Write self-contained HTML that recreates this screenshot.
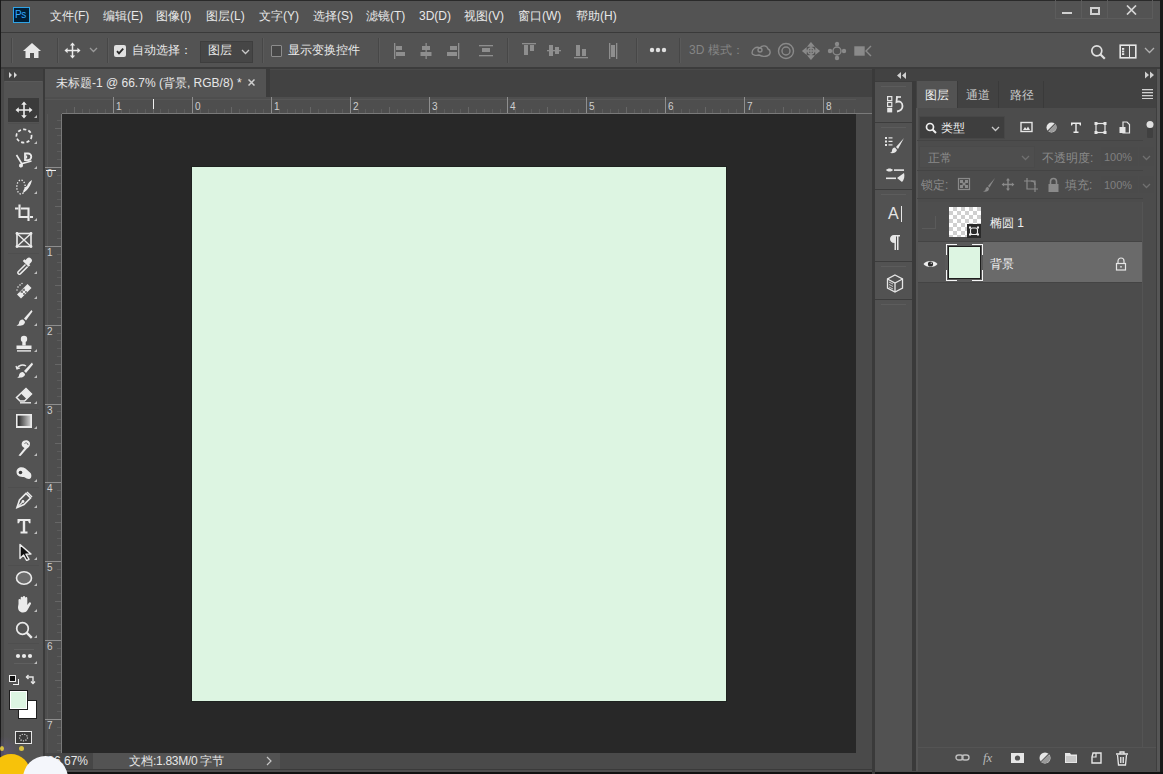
<!DOCTYPE html>
<html><head><meta charset="utf-8">
<style>
*{margin:0;padding:0;box-sizing:border-box}
html,body{width:1163px;height:774px;overflow:hidden;background:#535353;font-family:"Liberation Sans",sans-serif;color:#e6e6e6}
.a{position:absolute}
.c{display:inline-block;width:12px;font-style:normal;text-align:center;letter-spacing:0}
.sep{position:absolute;top:38px;width:1px;height:25px;background:#474747;box-shadow:1px 0 0 #5a5a5a}
.ot{position:absolute;top:42px;font-size:12px;line-height:16px;color:#e8e8e8;white-space:nowrap}
.grp{position:absolute;left:875px;width:37px;background:#525252;border-top:1px solid #3c3c3c}
.grp:before{content:"";position:absolute;left:6px;top:4px;width:25px;height:1px;background:#5c5c5c}
.mn{position:absolute;top:8px;font-size:12px;line-height:16px;color:#e8e8e8;white-space:nowrap}
#win{position:absolute;left:0;top:0;width:1163px;height:774px;background:#535353;overflow:hidden}
</style></head><body>
<div id="win">
  <!-- borders -->
  <div class="a" style="left:0;top:0;width:1163px;height:1px;background:#2a2a2a"></div>
  <div class="a" style="left:0;top:0;width:1px;height:774px;background:#1a1a1a"></div>
  <div class="a" style="left:1160px;top:0;width:3px;height:774px;background:#1a1a1a"></div>
  <!-- menu bar -->
  <div class="a" style="left:1px;top:1px;width:1159px;height:31px;background:#535353"></div>
  <div class="a" style="left:1px;top:32px;width:1159px;height:1px;background:#3a3a3a"></div>

  <!-- menu content -->
  <div class="a" style="left:13px;top:7px;width:17px;height:16px;background:#001e36;border:1px solid #2fa3e6"></div>
  <div class="a" style="left:15px;top:8px;font-size:10px;line-height:13px;color:#31a8ff;letter-spacing:-0.3px">Ps</div>
  <div class="mn" style="left:50px"><i class="c">文</i><i class="c">件</i>(F)</div>
  <div class="mn" style="left:103px"><i class="c">编</i><i class="c">辑</i>(E)</div>
  <div class="mn" style="left:156px"><i class="c">图</i><i class="c">像</i>(I)</div>
  <div class="mn" style="left:206px"><i class="c">图</i><i class="c">层</i>(L)</div>
  <div class="mn" style="left:259px"><i class="c">文</i><i class="c">字</i>(Y)</div>
  <div class="mn" style="left:313px"><i class="c">选</i><i class="c">择</i>(S)</div>
  <div class="mn" style="left:366px"><i class="c">滤</i><i class="c">镜</i>(T)</div>
  <div class="mn" style="left:419px">3D(D)</div>
  <div class="mn" style="left:464px"><i class="c">视</i><i class="c">图</i>(V)</div>
  <div class="mn" style="left:518px"><i class="c">窗</i><i class="c">口</i>(W)</div>
  <div class="mn" style="left:576px"><i class="c">帮</i><i class="c">助</i>(H)</div>
  <!-- window controls -->
  <div class="a" style="left:1055px;top:0;width:98px;height:19px;border:1px solid #5c5c5c;border-top:none"></div>
  <div class="a" style="left:1081px;top:0;width:1px;height:19px;background:#5c5c5c"></div>
  <div class="a" style="left:1107px;top:0;width:1px;height:19px;background:#5c5c5c"></div>
  <div class="a" style="left:1062px;top:12px;width:10px;height:2px;background:#d0d0d0"></div>
  <div class="a" style="left:1090px;top:7px;width:10px;height:8px;border:2px solid #d0d0d0;border-top-width:2px"></div>
  <svg class="a" style="left:1126px;top:5px" width="11" height="10" viewBox="0 0 11 10"><path d="M1 0.5L10 9.5M10 0.5L1 9.5" stroke="#d6d6d6" stroke-width="1.7"/></svg>
  <!-- options bar -->
  <div class="a" style="left:1px;top:33px;width:1159px;height:34px;background:#535353"></div>
  <div class="a" style="left:1px;top:67px;width:1159px;height:2px;background:#3c3c3c"></div>

  <!-- options content -->
  <div class="a" style="left:11px;top:38px;width:1px;height:25px;background:#474747"></div>
  <div class="a" style="left:12px;top:38px;width:1px;height:25px;background:#5c5c5c"></div>
  <svg class="a" style="left:23px;top:43px" width="18" height="15" viewBox="0 0 18 15"><path d="M9 0L0 8h2.5v7h4.5v-5h4v5h4.5V8H18z" fill="#e8e8e8"/></svg>
  <div class="sep" style="left:57px"></div>
  <svg class="a" style="left:64px;top:42px" width="17" height="17" viewBox="0 0 18 18"><path d="M9 0.5L6.2 3.8h2v4.4H3.8v-2L0.5 9l3.3 2.8v-2h4.4v4.4h-2L9 17.5l2.8-3.3h-2V9.8h4.4v2L17.5 9l-3.3-2.8v2H9.8V3.8h2z" fill="#ebebeb"/></svg>
  <svg class="a" style="left:89px;top:47px" width="9" height="6" viewBox="0 0 9 6"><path d="M1 1l3.5 3.5L8 1" stroke="#9a9a9a" stroke-width="1.3" fill="none"/></svg>
  <div class="sep" style="left:107px"></div>
  <div class="a" style="left:114px;top:45px;width:12px;height:12px;background:#e0e0e0;border-radius:2px"></div>
  <svg class="a" style="left:115px;top:46px" width="10" height="10" viewBox="0 0 10 10"><path d="M2 5.2l2 2.2L8.2 2.6" stroke="#2a2a2a" stroke-width="1.8" fill="none"/></svg>
  <div class="ot" style="left:132px"><i class="c">自</i><i class="c">动</i><i class="c">选</i><i class="c">择</i><i class="c">：</i></div>
  <div class="a" style="left:200px;top:41px;width:53px;height:22px;background:#464646;border:1px solid #3e3e3e"></div>
  <div class="ot" style="left:208px"><i class="c">图</i><i class="c">层</i></div>
  <svg class="a" style="left:241px;top:49px" width="9" height="6" viewBox="0 0 9 6"><path d="M1 1l3.5 3.5L8 1" stroke="#c8c8c8" stroke-width="1.3" fill="none"/></svg>
  <div class="sep" style="left:262px"></div>
  <div class="a" style="left:271px;top:45px;width:11px;height:12px;background:#464646;border:1px solid #8c8c8c;border-radius:1px"></div>
  <div class="ot" style="left:288px"><i class="c">显</i><i class="c">示</i><i class="c">变</i><i class="c">换</i><i class="c">控</i><i class="c">件</i></div>
  <div class="sep" style="left:378px"></div>
  <svg class="a" style="left:393px;top:41px" width="100" height="20" viewBox="0 0 100 20" fill="#8e8e8e">
    <rect x="1" y="2" width="1.3" height="16"/><rect x="3" y="5" width="6" height="4"/><rect x="3" y="11" width="9" height="4"/>
    <rect x="32.5" y="2" width="1.3" height="16"/><rect x="29" y="5" width="8" height="4"/><rect x="27.5" y="11" width="11" height="4"/>
    <rect x="65" y="2" width="1.3" height="16"/><rect x="57" y="5" width="7" height="4"/><rect x="54" y="11" width="10" height="4"/>
    <rect x="86" y="4" width="14" height="1.3"/><rect x="89" y="7" width="8" height="4"/><rect x="86" y="14" width="14" height="1.3"/>
  </svg>
  <div class="sep" style="left:507px"></div>
  <svg class="a" style="left:520px;top:41px" width="105" height="20" viewBox="0 0 105 20" fill="#8e8e8e">
    <rect x="2" y="2" width="14" height="1.3"/><rect x="4" y="4" width="4" height="10"/><rect x="10" y="4" width="4" height="6"/>
    <rect x="27" y="9" width="14" height="1.3"/><rect x="29" y="4" width="4" height="11"/><rect x="35" y="6" width="4" height="7"/>
    <rect x="54" y="16" width="14" height="1.3"/><rect x="56" y="4" width="4" height="11"/><rect x="62" y="8" width="4" height="7"/>
    <rect x="89" y="2" width="1.3" height="16"/><rect x="91" y="4" width="4" height="12"/><rect x="96" y="2" width="1.3" height="16"/>
  </svg>
  <div class="sep" style="left:636px"></div>
  <svg class="a" style="left:649px;top:47px" width="18" height="6" viewBox="0 0 18 6" fill="#e0e0e0"><circle cx="3" cy="3" r="2.2"/><circle cx="9" cy="3" r="2.2"/><circle cx="15" cy="3" r="2.2"/></svg>
  <div class="sep" style="left:679px"></div>
  <div class="ot" style="left:689px;color:#858585">3D <i class="c">模</i><i class="c">式</i><i class="c">：</i></div>
  <svg class="a" style="left:750px;top:41px" width="125" height="20" viewBox="0 0 125 20" fill="none" stroke="#8a8a8a" stroke-width="1.4">
    <path d="M2 12c0-4 4-7 8-5 2-3 7-3 8 1 3 1 3 6-1 7-3 1-6 0-8-1-3 1-7 0-7-2z"/><circle cx="10" cy="9" r="2"/>
    <circle cx="36" cy="10" r="7.5"/><circle cx="36" cy="10" r="4"/>
    <path d="M61 2v16M53 10h16M61 2l-2.5 3h5zM61 18l-2.5-3h5zM53 10l3-2.5v5zM69 10l-3-2.5v5z"/><circle cx="61" cy="10" r="3"/>
    <circle cx="87" cy="10" r="4"/><circle cx="87" cy="3" r="1.5" fill="#8a8a8a"/><circle cx="87" cy="17" r="1.5" fill="#8a8a8a"/><circle cx="80" cy="10" r="1.5" fill="#8a8a8a"/><circle cx="94" cy="10" r="1.5" fill="#8a8a8a"/>
    <rect x="105" y="6" width="9" height="8" fill="#8a8a8a"/><path d="M121 5l-5 5 5 5"/>
  </svg>
  <svg class="a" style="left:1090px;top:44px" width="16" height="16" viewBox="0 0 16 16" fill="none" stroke="#e0e0e0"><circle cx="6.8" cy="6.8" r="5" stroke-width="1.7"/><path d="M10.3 10.3l4.5 4.5" stroke-width="2.2"/></svg>
  <svg class="a" style="left:1119px;top:44px" width="18" height="15" viewBox="0 0 18 15" fill="none" stroke="#e6e6e6"><rect x="1.2" y="1.2" width="15.6" height="12.6" stroke-width="1.6"/><path d="M10.5 2v11" stroke-width="1"/><g fill="#e6e6e6" stroke="none"><rect x="3" y="4" width="2.2" height="1.8"/><rect x="3" y="6.6" width="2.2" height="1.8"/><rect x="3" y="9.2" width="2.2" height="1.8"/></g></svg>
  <svg class="a" style="left:1144px;top:47px" width="11" height="7" viewBox="0 0 11 7"><path d="M1 1l4.5 4.5L10 1" stroke="#b0b0b0" stroke-width="1.3" fill="none"/></svg>
  <!-- tools panel -->
  <div class="a" style="left:1px;top:69px;width:3px;height:705px;background:#4a4a4a"></div>
  <div class="a" style="left:4px;top:69px;width:39px;height:12px;background:#424242"></div>
  <div class="a" style="left:4px;top:81px;width:39px;height:693px;background:#535353"></div>
  <div class="a" style="left:43px;top:69px;width:2px;height:705px;background:#3a3a3a"></div>

  <!-- tools -->
  <svg class="a" style="left:9px;top:72px" width="9" height="6" viewBox="0 0 9 6" fill="#d8d8d8"><path d="M0 0l3 3-3 3zM5 0l3 3-3 3z"/></svg>
  <div class="a" style="left:5px;top:81px;width:37px;height:1px;background:#5a5a5a"></div>
  <div class="a" style="left:8px;top:98px;width:31px;height:24px;background:#3b3b3b"></div>
  <svg class="a" style="left:15px;top:101px" width="18" height="18" viewBox="0 0 18 18"><path d="M9 0.5L6.2 3.8h2v4.4H3.8v-2L0.5 9l3.3 2.8v-2h4.4v4.4h-2L9 17.5l2.8-3.3h-2V9.8h4.4v2L17.5 9l-3.3-2.8v2H9.8V3.8h2z" fill="#ebebeb"/></svg>
  <svg class="a" style="left:15px;top:127px" width="18" height="18" viewBox="0 0 18 18"><ellipse cx="9" cy="9" rx="7.6" ry="6.6" fill="none" stroke="#ebebeb" stroke-width="1.7" stroke-dasharray="3.2 2.2"/></svg>
  <svg class="a" style="left:34px;top:141px" width="3" height="3" viewBox="0 0 3 3"><path d="M3 0V3H0z" fill="#bdbdbd"/></svg>
  <svg class="a" style="left:15px;top:152px" width="18" height="18" viewBox="0 0 18 18"><path d="M10 1.5h3a3.3 3.3 0 0 1 0 6.6h-3z" fill="none" stroke="#ebebeb" stroke-width="1.8"/><path d="M11.5 3.5v3" stroke="#ebebeb" stroke-width="1.3"/><path d="M1.5 3l5.5 9M5 15l2.5-3.5L16.5 9" fill="none" stroke="#ebebeb" stroke-width="1.6"/><circle cx="6" cy="13.5" r="2" fill="#ebebeb"/></svg>
  <svg class="a" style="left:34px;top:166px" width="3" height="3" viewBox="0 0 3 3"><path d="M3 0V3H0z" fill="#bdbdbd"/></svg>
  <svg class="a" style="left:15px;top:177px" width="18" height="18" viewBox="0 0 18 18"><ellipse cx="6" cy="10" rx="4.2" ry="7" fill="none" stroke="#ebebeb" stroke-width="1.3" stroke-dasharray="1.4 1.6"/><path d="M17 3c-1 5-4 10-9 13 0-3 2-6 4-7 1-3 3-5 5-6z" fill="#ebebeb"/></svg>
  <svg class="a" style="left:34px;top:191px" width="3" height="3" viewBox="0 0 3 3"><path d="M3 0V3H0z" fill="#bdbdbd"/></svg>
  <svg class="a" style="left:15px;top:204px" width="18" height="18" viewBox="0 0 18 18"><path d="M4.5 0.5v12.5h9" fill="none" stroke="#ebebeb" stroke-width="2.1"/><path d="M0 4.5h3.5M6 4.5h7.5v12.5M15 13h3" fill="none" stroke="#ebebeb" stroke-width="2.1"/></svg>
  <svg class="a" style="left:34px;top:218px" width="3" height="3" viewBox="0 0 3 3"><path d="M3 0V3H0z" fill="#bdbdbd"/></svg>
  <svg class="a" style="left:15px;top:231px" width="18" height="18" viewBox="0 0 18 18"><rect x="2" y="2.5" width="14" height="13" fill="none" stroke="#ebebeb" stroke-width="1.6"/><path d="M2 2.5l14 13M16 2.5l-14 13" stroke="#ebebeb" stroke-width="1.4"/><g fill="#ebebeb"><circle cx="2" cy="2.5" r="1.4"/><circle cx="16" cy="2.5" r="1.4"/><circle cx="2" cy="15.5" r="1.4"/><circle cx="16" cy="15.5" r="1.4"/></g></svg>
  <svg class="a" style="left:15px;top:257px" width="18" height="18" viewBox="0 0 18 18"><path d="M12 1.5a2.7 2.7 0 0 1 4 4l-2.2 2.2-4-4z" fill="#ebebeb"/><path d="M8.6 3.2l5.8 5.8" stroke="#ebebeb" stroke-width="2.4"/><path d="M10.5 7.5L3.2 14.8a1.5 1.5 0 0 0 2.1 2.1L12.6 9.6" fill="none" stroke="#ebebeb" stroke-width="1.5"/></svg>
  <svg class="a" style="left:34px;top:271px" width="3" height="3" viewBox="0 0 3 3"><path d="M3 0V3H0z" fill="#bdbdbd"/></svg>
  <svg class="a" style="left:15px;top:282px" width="18" height="18" viewBox="0 0 18 18"><path d="M13.5 2.5l4 4L7 17l-4-4z" fill="#ebebeb" transform="translate(-1,-0.5)"/><g fill="#535353"><circle cx="9" cy="8" r="0.9"/><circle cx="11" cy="10" r="0.9"/><circle cx="7" cy="10" r="0.9"/><circle cx="9" cy="12" r="0.9"/></g><path d="M5 10.5l4-4M10 15.5l4-4" stroke="#535353" stroke-width="0.8"/><g fill="#ebebeb"><circle cx="3" cy="5" r="0.8"/><circle cx="5" cy="3" r="0.8"/><circle cx="7" cy="1.5" r="0.7"/><circle cx="2" cy="8" r="0.7"/></g></svg>
  <svg class="a" style="left:34px;top:296px" width="3" height="3" viewBox="0 0 3 3"><path d="M3 0V3H0z" fill="#bdbdbd"/></svg>
  <svg class="a" style="left:15px;top:309px" width="18" height="18" viewBox="0 0 18 18"><path d="M16.5 1L9 9.5l2 2L17.5 2.5z" fill="#ebebeb"/><path d="M8 10.5c-2.5 0-4 1.8-4 3.6 0 1.2-1.2 2-2.5 2.4 3.5 0.8 8.5 0 8.5-3.8z" fill="#ebebeb"/></svg>
  <svg class="a" style="left:34px;top:323px" width="3" height="3" viewBox="0 0 3 3"><path d="M3 0V3H0z" fill="#bdbdbd"/></svg>
  <svg class="a" style="left:15px;top:335px" width="18" height="18" viewBox="0 0 18 18"><circle cx="9" cy="4" r="3.2" fill="#ebebeb"/><rect x="7.3" y="6.5" width="3.4" height="4" fill="#ebebeb"/><rect x="1.5" y="10.5" width="15" height="3.5" fill="#ebebeb"/><rect x="2" y="15.2" width="14" height="1.4" fill="#ebebeb"/></svg>
  <svg class="a" style="left:34px;top:349px" width="3" height="3" viewBox="0 0 3 3"><path d="M3 0V3H0z" fill="#bdbdbd"/></svg>
  <svg class="a" style="left:15px;top:361px" width="18" height="18" viewBox="0 0 18 18"><path d="M17 1.5L9 10l2 2 7-8.5z" fill="#ebebeb"/><path d="M8 11c-2.5 0-4 1.8-4 3.4 0 1-1 1.6-2 2 3.5 0.7 8 0 8-3.4z" fill="#ebebeb"/><path d="M2 7.5C3.5 4 8 3 11 5" fill="none" stroke="#ebebeb" stroke-width="1.5"/><path d="M1 5l1 3 3-1" fill="none" stroke="#ebebeb" stroke-width="1.3"/></svg>
  <svg class="a" style="left:34px;top:375px" width="3" height="3" viewBox="0 0 3 3"><path d="M3 0V3H0z" fill="#bdbdbd"/></svg>
  <svg class="a" style="left:15px;top:387px" width="18" height="18" viewBox="0 0 18 18"><path d="M11 1.5l5.5 5.5-7 7H5L1.5 10.5z" fill="none" stroke="#ebebeb" stroke-width="1.5"/><path d="M11 1.5l5.5 5.5-5 5L6 6.5z" fill="#ebebeb"/><path d="M5 15.8h11" stroke="#ebebeb" stroke-width="1.4"/></svg>
  <svg class="a" style="left:34px;top:401px" width="3" height="3" viewBox="0 0 3 3"><path d="M3 0V3H0z" fill="#bdbdbd"/></svg>
  <svg class="a" style="left:15px;top:412px" width="18" height="18" viewBox="0 0 18 18"><defs><linearGradient id="gg" x1="0" x2="1"><stop offset="0" stop-color="#1e1e1e"/><stop offset="1" stop-color="#d8d8d8"/></linearGradient></defs><rect x="1.8" y="2.8" width="14.4" height="12" fill="url(#gg)" stroke="#ebebeb" stroke-width="1.6"/><rect x="1" y="14" width="16" height="2" fill="#ebebeb"/></svg>
  <svg class="a" style="left:34px;top:426px" width="3" height="3" viewBox="0 0 3 3"><path d="M3 0V3H0z" fill="#bdbdbd"/></svg>
  <svg class="a" style="left:15px;top:439px" width="18" height="18" viewBox="0 0 18 18"><path d="M3.5 16.5l6-7.5c-2.5-1-3.5-3.5-2.5-5.5 1.2-2.5 6-3 7.5-0.5 1.3 2.2 0 5.5-2.5 6.5l-6.5 7.5z" fill="#ebebeb"/><path d="M9.5 4.5c1.5-1.2 3.5-0.8 3.5 1.5" fill="none" stroke="#6a6a6a" stroke-width="1"/></svg>
  <svg class="a" style="left:34px;top:453px" width="3" height="3" viewBox="0 0 3 3"><path d="M3 0V3H0z" fill="#bdbdbd"/></svg>
  <svg class="a" style="left:15px;top:465px" width="18" height="18" viewBox="0 0 18 18"><path d="M1.5 7c0-4.5 5-6 9-3.5l5 4.5c1.5 2 1 6-1.5 6-1.5 0-3-1-5-2-4 0-7.5-1-7.5-5z" fill="#ebebeb"/><circle cx="5.5" cy="7.5" r="1.8" fill="#3a3a3a"/></svg>
  <svg class="a" style="left:34px;top:479px" width="3" height="3" viewBox="0 0 3 3"><path d="M3 0V3H0z" fill="#bdbdbd"/></svg>
  <svg class="a" style="left:15px;top:491px" width="18" height="18" viewBox="0 0 18 18"><path d="M2 16.5L4.5 9l6.5-6.5 4.5 4.5L9 13.5z" fill="none" stroke="#ebebeb" stroke-width="1.6"/><path d="M2 16.5l5.5-5.5" stroke="#ebebeb" stroke-width="1.1"/><circle cx="8" cy="10.5" r="1.4" fill="#ebebeb"/><path d="M11.5 1.5l5 5 1-1-5-5z" fill="#ebebeb"/></svg>
  <svg class="a" style="left:34px;top:505px" width="3" height="3" viewBox="0 0 3 3"><path d="M3 0V3H0z" fill="#bdbdbd"/></svg>
  <svg class="a" style="left:15px;top:517px" width="18" height="18" viewBox="0 0 18 18"><path d="M2.5 2h13v4.2h-1.4l-1-2.2H10.2v10.6h2.3V16.5H5.5v-1.9h2.3V4H5L4 6.2H2.5z" fill="#ebebeb"/></svg>
  <svg class="a" style="left:34px;top:531px" width="3" height="3" viewBox="0 0 3 3"><path d="M3 0V3H0z" fill="#bdbdbd"/></svg>
  <svg class="a" style="left:15px;top:543px" width="18" height="18" viewBox="0 0 18 18"><path d="M5 1.5v14l3.6-3.4 3 5.4 2.4-1.2-3-5.2h5z" fill="#111" stroke="#ebebeb" stroke-width="1.4" stroke-linejoin="round"/></svg>
  <svg class="a" style="left:34px;top:557px" width="3" height="3" viewBox="0 0 3 3"><path d="M3 0V3H0z" fill="#bdbdbd"/></svg>
  <svg class="a" style="left:15px;top:569px" width="18" height="18" viewBox="0 0 18 18"><ellipse cx="9" cy="9" rx="7.5" ry="6.3" fill="#6c6c6c" stroke="#ebebeb" stroke-width="1.6"/></svg>
  <svg class="a" style="left:34px;top:583px" width="3" height="3" viewBox="0 0 3 3"><path d="M3 0V3H0z" fill="#bdbdbd"/></svg>
  <svg class="a" style="left:15px;top:595px" width="18" height="18" viewBox="0 0 18 18"><path d="M3.5 9V5a1.1 1.1 0 0 1 2.2 0v4V2.8a1.1 1.1 0 0 1 2.2 0V9V2.2a1.1 1.1 0 0 1 2.2 0V9V3.2a1.1 1.1 0 0 1 2.2 0v6.8l1.7-2.2a1.1 1.1 0 0 1 1.9 1.1L12.5 15c-1.2 1.8-2.5 2.5-4.5 2.5-3.3 0-5-2.3-5-5.5z" fill="#ebebeb"/></svg>
  <svg class="a" style="left:34px;top:609px" width="3" height="3" viewBox="0 0 3 3"><path d="M3 0V3H0z" fill="#bdbdbd"/></svg>
  <svg class="a" style="left:15px;top:621px" width="18" height="18" viewBox="0 0 18 18"><circle cx="7.5" cy="7.5" r="5.8" fill="none" stroke="#ebebeb" stroke-width="1.7"/><path d="M11.6 11.6l5.2 5.2" stroke="#ebebeb" stroke-width="2.4"/></svg>
  <svg class="a" style="left:34px;top:635px" width="3" height="3" viewBox="0 0 3 3"><path d="M3 0V3H0z" fill="#bdbdbd"/></svg>
  <svg class="a" style="left:15px;top:647px" width="18" height="18" viewBox="0 0 18 18"><circle cx="3" cy="9" r="2.1" fill="#ebebeb"/><circle cx="9" cy="9" r="2.1" fill="#ebebeb"/><circle cx="15" cy="9" r="2.1" fill="#ebebeb"/></svg>
  <svg class="a" style="left:34px;top:661px" width="3" height="3" viewBox="0 0 3 3"><path d="M3 0V3H0z" fill="#bdbdbd"/></svg>
  <svg class="a" style="left:34px;top:115px" width="3" height="3" viewBox="0 0 3 3"><path d="M3 0V3H0z" fill="#bdbdbd"/></svg>
  <div class="a" style="left:8px;top:123px;width:31px;height:1px;background:#4e4e4e"></div>
  <div class="a" style="left:8px;top:253px;width:31px;height:1px;background:#4e4e4e"></div>
  <div class="a" style="left:8px;top:409px;width:31px;height:1px;background:#4e4e4e"></div>
  <div class="a" style="left:8px;top:487px;width:31px;height:1px;background:#4e4e4e"></div>
  <div class="a" style="left:8px;top:565px;width:31px;height:1px;background:#4e4e4e"></div>
  <div class="a" style="left:8px;top:643px;width:31px;height:1px;background:#4e4e4e"></div>
  <div class="a" style="left:14px;top:649px;width:20px;height:1px;background:#5f5f5f"></div>
  <div class="a" style="left:14px;top:663px;width:20px;height:1px;background:#5f5f5f"></div>
  <div class="a" style="left:9px;top:675px;width:7px;height:7px;background:#111;border:1px solid #eee"></div>
  <div class="a" style="left:13px;top:679px;width:6px;height:6px;border:1px solid #eee;border-top:none;border-left:none"></div>
  <svg class="a" style="left:25px;top:674px" width="11" height="11" viewBox="0 0 11 11" fill="none" stroke="#e6e6e6" stroke-width="1.4"><path d="M1.5 3h6.5v6.5"/><path d="M3.5 1L1.5 3l2 2M6 7.5l2 2 2-2" /></svg>
  <div class="a" style="left:18px;top:700px;width:19px;height:19px;background:#1e1e1e"></div>
  <div class="a" style="left:19px;top:701px;width:17px;height:17px;background:#ffffff"></div>
  <div class="a" style="left:9px;top:690px;width:19px;height:20px;background:#1e1e1e"></div>
  <div class="a" style="left:10px;top:691px;width:17px;height:18px;background:#ddf5e2;border:1px solid #fff"></div>
  <div class="a" style="left:15px;top:731px;width:17px;height:13px;border:1.5px solid #e6e6e6;background:#3a3a3a"></div>
  <svg class="a" style="left:17px;top:733px" width="13" height="9" viewBox="0 0 13 9"><ellipse cx="6.5" cy="4.5" rx="4" ry="3.3" fill="none" stroke="#d8d8d8" stroke-width="1.2" stroke-dasharray="1.2 1.3"/></svg>
  <!-- doc area -->
  <div class="a" style="left:45px;top:69px;width:827px;height:28px;background:#424242"></div>
  <div class="a" style="left:45px;top:69px;width:221px;height:28px;background:#535353"></div>
  <div class="a" style="left:266px;top:69px;width:4px;height:28px;background:#3c3c3c"></div>
  <div class="a" style="left:270px;top:69px;width:602px;height:1px;background:#4a4a4a"></div>
  <div class="a" style="left:45px;top:97px;width:827px;height:17px;background:#4e4e4e"></div>
  <div class="a" style="left:45px;top:99px;width:811px;height:1px;background:#565656"></div>
  <div class="a" style="left:45px;top:114px;width:17px;height:639px;background:#4e4e4e"></div>
  <div class="a" style="left:47px;top:114px;width:1px;height:639px;background:#565656"></div>
  <div class="a" style="left:62px;top:114px;width:794px;height:639px;background:#282828"></div>
  <div class="a" style="left:856px;top:114px;width:16px;height:639px;background:#4a4a4a"></div>
  <div class="a" style="left:192px;top:167px;width:534px;height:534px;background:#ddf5e2;box-shadow:0 0 0 1px #1e221f"></div>
  <!-- status bar -->
  <div class="a" style="left:45px;top:753px;width:827px;height:16px;background:#4a4a4a"></div>
  <div class="a" style="left:93px;top:753px;width:187px;height:16px;background:#535353"></div>
  <div class="a" style="left:45px;top:753px;width:48px;height:16px;background:#464646"></div>
  <div class="a" style="left:1px;top:769px;width:1159px;height:1px;background:#3a3a3a"></div>
  <div class="a" style="left:1px;top:770px;width:1159px;height:2px;background:#4e4e4e"></div>
  <div class="a" style="left:0;top:772px;width:1163px;height:2px;background:#111"></div>

  <!-- doc tab/ruler content -->
  <div class="a" style="left:56px;top:75px;font-size:12px;line-height:16px;color:#e6e6e6;white-space:nowrap"><i class="c">未</i><i class="c">标</i><i class="c">题</i>-1 @ 66.7% (<i class="c">背</i><i class="c">景</i>, RGB/8) *</div>
  <svg class="a" style="left:248px;top:79px" width="7" height="7" viewBox="0 0 7 7"><path d="M0.5 0.5l6 6M6.5 0.5l-6 6" stroke="#cfcfcf" stroke-width="1.5"/></svg>
  <svg class="a" style="left:62px;top:97px" width="810" height="17" viewBox="0 0 810 17"><g fill="#5c5c5c"><rect x="4" y="12" width="1" height="5"/><rect x="20" y="12" width="1" height="5"/><rect x="27" y="12" width="1" height="5"/><rect x="35" y="12" width="1" height="5"/><rect x="43" y="12" width="1" height="5"/><rect x="59" y="12" width="1" height="5"/><rect x="67" y="12" width="1" height="5"/><rect x="75" y="12" width="1" height="5"/><rect x="83" y="12" width="1" height="5"/><rect x="98" y="12" width="1" height="5"/><rect x="106" y="12" width="1" height="5"/><rect x="114" y="12" width="1" height="5"/><rect x="122" y="12" width="1" height="5"/><rect x="138" y="12" width="1" height="5"/><rect x="146" y="12" width="1" height="5"/><rect x="154" y="12" width="1" height="5"/><rect x="162" y="12" width="1" height="5"/><rect x="177" y="12" width="1" height="5"/><rect x="185" y="12" width="1" height="5"/><rect x="193" y="12" width="1" height="5"/><rect x="201" y="12" width="1" height="5"/><rect x="217" y="12" width="1" height="5"/><rect x="225" y="12" width="1" height="5"/><rect x="233" y="12" width="1" height="5"/><rect x="240" y="12" width="1" height="5"/><rect x="256" y="12" width="1" height="5"/><rect x="264" y="12" width="1" height="5"/><rect x="272" y="12" width="1" height="5"/><rect x="280" y="12" width="1" height="5"/><rect x="296" y="12" width="1" height="5"/><rect x="303" y="12" width="1" height="5"/><rect x="311" y="12" width="1" height="5"/><rect x="319" y="12" width="1" height="5"/><rect x="335" y="12" width="1" height="5"/><rect x="343" y="12" width="1" height="5"/><rect x="351" y="12" width="1" height="5"/><rect x="359" y="12" width="1" height="5"/><rect x="374" y="12" width="1" height="5"/><rect x="382" y="12" width="1" height="5"/><rect x="390" y="12" width="1" height="5"/><rect x="398" y="12" width="1" height="5"/><rect x="414" y="12" width="1" height="5"/><rect x="422" y="12" width="1" height="5"/><rect x="430" y="12" width="1" height="5"/><rect x="438" y="12" width="1" height="5"/><rect x="453" y="12" width="1" height="5"/><rect x="461" y="12" width="1" height="5"/><rect x="469" y="12" width="1" height="5"/><rect x="477" y="12" width="1" height="5"/><rect x="493" y="12" width="1" height="5"/><rect x="501" y="12" width="1" height="5"/><rect x="508" y="12" width="1" height="5"/><rect x="516" y="12" width="1" height="5"/><rect x="532" y="12" width="1" height="5"/><rect x="540" y="12" width="1" height="5"/><rect x="548" y="12" width="1" height="5"/><rect x="556" y="12" width="1" height="5"/><rect x="572" y="12" width="1" height="5"/><rect x="579" y="12" width="1" height="5"/><rect x="587" y="12" width="1" height="5"/><rect x="595" y="12" width="1" height="5"/><rect x="611" y="12" width="1" height="5"/><rect x="619" y="12" width="1" height="5"/><rect x="627" y="12" width="1" height="5"/><rect x="635" y="12" width="1" height="5"/><rect x="650" y="12" width="1" height="5"/><rect x="658" y="12" width="1" height="5"/><rect x="666" y="12" width="1" height="5"/><rect x="674" y="12" width="1" height="5"/><rect x="690" y="12" width="1" height="5"/><rect x="698" y="12" width="1" height="5"/><rect x="706" y="12" width="1" height="5"/><rect x="713" y="12" width="1" height="5"/><rect x="729" y="12" width="1" height="5"/><rect x="737" y="12" width="1" height="5"/><rect x="745" y="12" width="1" height="5"/><rect x="753" y="12" width="1" height="5"/><rect x="769" y="12" width="1" height="5"/><rect x="777" y="12" width="1" height="5"/><rect x="784" y="12" width="1" height="5"/><rect x="792" y="12" width="1" height="5"/></g><g fill="#666"><rect x="12" y="10" width="1" height="7"/><rect x="91" y="10" width="1" height="7"/><rect x="169" y="10" width="1" height="7"/><rect x="248" y="10" width="1" height="7"/><rect x="327" y="10" width="1" height="7"/><rect x="406" y="10" width="1" height="7"/><rect x="485" y="10" width="1" height="7"/><rect x="564" y="10" width="1" height="7"/><rect x="643" y="10" width="1" height="7"/><rect x="721" y="10" width="1" height="7"/></g><g fill="#8e8e8e"><rect x="51" y="0" width="1" height="17"/><rect x="130" y="0" width="1" height="17"/><rect x="209" y="0" width="1" height="17"/><rect x="288" y="0" width="1" height="17"/><rect x="367" y="0" width="1" height="17"/><rect x="445" y="0" width="1" height="17"/><rect x="524" y="0" width="1" height="17"/><rect x="603" y="0" width="1" height="17"/><rect x="682" y="0" width="1" height="17"/><rect x="761" y="0" width="1" height="17"/></g><g fill="#cfcfcf" font-size="10" font-family="Liberation Sans"><text x="54" y="13">1</text><text x="133" y="13">0</text><text x="212" y="13">1</text><text x="291" y="13">2</text><text x="370" y="13">3</text><text x="448" y="13">4</text><text x="527" y="13">5</text><text x="606" y="13">6</text><text x="685" y="13">7</text><text x="764" y="13">8</text></g></svg>
  <div class="a" style="left:62px;top:113px;width:810px;height:1px;background:#7a7a7a"></div>
  <svg class="a" style="left:45px;top:114px" width="17" height="639" viewBox="0 0 17 639"><g fill="#5c5c5c"><rect x="12" y="6" width="5" height="1"/><rect x="12" y="21" width="5" height="1"/><rect x="12" y="29" width="5" height="1"/><rect x="12" y="37" width="5" height="1"/><rect x="12" y="45" width="5" height="1"/><rect x="12" y="61" width="5" height="1"/><rect x="12" y="69" width="5" height="1"/><rect x="12" y="77" width="5" height="1"/><rect x="12" y="85" width="5" height="1"/><rect x="12" y="100" width="5" height="1"/><rect x="12" y="108" width="5" height="1"/><rect x="12" y="116" width="5" height="1"/><rect x="12" y="124" width="5" height="1"/><rect x="12" y="140" width="5" height="1"/><rect x="12" y="148" width="5" height="1"/><rect x="12" y="156" width="5" height="1"/><rect x="12" y="163" width="5" height="1"/><rect x="12" y="179" width="5" height="1"/><rect x="12" y="187" width="5" height="1"/><rect x="12" y="195" width="5" height="1"/><rect x="12" y="203" width="5" height="1"/><rect x="12" y="219" width="5" height="1"/><rect x="12" y="226" width="5" height="1"/><rect x="12" y="234" width="5" height="1"/><rect x="12" y="242" width="5" height="1"/><rect x="12" y="258" width="5" height="1"/><rect x="12" y="266" width="5" height="1"/><rect x="12" y="274" width="5" height="1"/><rect x="12" y="282" width="5" height="1"/><rect x="12" y="297" width="5" height="1"/><rect x="12" y="305" width="5" height="1"/><rect x="12" y="313" width="5" height="1"/><rect x="12" y="321" width="5" height="1"/><rect x="12" y="337" width="5" height="1"/><rect x="12" y="345" width="5" height="1"/><rect x="12" y="353" width="5" height="1"/><rect x="12" y="361" width="5" height="1"/><rect x="12" y="376" width="5" height="1"/><rect x="12" y="384" width="5" height="1"/><rect x="12" y="392" width="5" height="1"/><rect x="12" y="400" width="5" height="1"/><rect x="12" y="416" width="5" height="1"/><rect x="12" y="424" width="5" height="1"/><rect x="12" y="431" width="5" height="1"/><rect x="12" y="439" width="5" height="1"/><rect x="12" y="455" width="5" height="1"/><rect x="12" y="463" width="5" height="1"/><rect x="12" y="471" width="5" height="1"/><rect x="12" y="479" width="5" height="1"/><rect x="12" y="495" width="5" height="1"/><rect x="12" y="502" width="5" height="1"/><rect x="12" y="510" width="5" height="1"/><rect x="12" y="518" width="5" height="1"/><rect x="12" y="534" width="5" height="1"/><rect x="12" y="542" width="5" height="1"/><rect x="12" y="550" width="5" height="1"/><rect x="12" y="558" width="5" height="1"/><rect x="12" y="573" width="5" height="1"/><rect x="12" y="581" width="5" height="1"/><rect x="12" y="589" width="5" height="1"/><rect x="12" y="597" width="5" height="1"/><rect x="12" y="613" width="5" height="1"/><rect x="12" y="621" width="5" height="1"/><rect x="12" y="629" width="5" height="1"/><rect x="12" y="636" width="5" height="1"/></g><g fill="#666"><rect x="10" y="14" width="7" height="1"/><rect x="10" y="92" width="7" height="1"/><rect x="10" y="171" width="7" height="1"/><rect x="10" y="250" width="7" height="1"/><rect x="10" y="329" width="7" height="1"/><rect x="10" y="408" width="7" height="1"/><rect x="10" y="487" width="7" height="1"/><rect x="10" y="566" width="7" height="1"/></g><g fill="#8e8e8e"><rect x="0" y="53" width="17" height="1"/><rect x="0" y="132" width="17" height="1"/><rect x="0" y="211" width="17" height="1"/><rect x="0" y="290" width="17" height="1"/><rect x="0" y="368" width="17" height="1"/><rect x="0" y="447" width="17" height="1"/><rect x="0" y="526" width="17" height="1"/><rect x="0" y="605" width="17" height="1"/></g><g fill="#cfcfcf" font-size="10" font-family="Liberation Sans"><text x="2" y="63">0</text><text x="2" y="142">1</text><text x="2" y="221">2</text><text x="2" y="300">3</text><text x="2" y="378">4</text><text x="2" y="457">5</text><text x="2" y="536">6</text><text x="2" y="615">7</text></g></svg>
  <div class="a" style="left:61px;top:114px;width:1px;height:639px;background:#7a7a7a"></div>
  <div class="a" style="left:153px;top:99px;width:1px;height:10px;background:#f0f0f0"></div>
  <div class="a" style="left:46px;top:170px;width:10px;height:1px;background:#f0f0f0"></div>
  <div class="a" style="left:5px;top:755px"></div>
  <div class="a" style="left:28px;top:753px;width:60px;text-align:right;font-size:12px;line-height:16px;color:#e6e6e6;white-space:nowrap">66.67%</div>
    <div class="a" style="left:129px;top:753px;font-size:12px;line-height:16px;color:#e6e6e6;white-space:nowrap;letter-spacing:-0.3px"><i class="c">文</i><i class="c">档</i>:1.83M/0 <i class="c">字</i><i class="c">节</i></div>
  <svg class="a" style="left:266px;top:756px" width="6" height="10" viewBox="0 0 6 10"><path d="M1 1l4 4-4 4" stroke="#c8c8c8" stroke-width="1.2" fill="none"/></svg>
    <!-- right collapsed column -->
  <div class="a" style="left:872px;top:69px;width:3px;height:705px;background:#3a3a3a"></div>
  <div class="a" style="left:875px;top:69px;width:285px;height:12px;background:#424242"></div>
  <div class="a" style="left:875px;top:81px;width:37px;height:690px;background:#535353"></div>
  <div class="a" style="left:912px;top:81px;width:4px;height:690px;background:#3a3a3a"></div>
  <!-- layers panel -->
  <div class="a" style="left:916px;top:81px;width:244px;height:27px;background:#424242"></div>
  <div class="a" style="left:916px;top:108px;width:244px;height:663px;background:#4c4c4c"></div>
  <div class="a" style="left:916px;top:108px;width:2px;height:663px;background:#555"></div>
  <div class="a" style="left:1156px;top:69px;width:1px;height:702px;background:#3e3e3e"></div>
  <div class="a" style="left:1157px;top:69px;width:3px;height:702px;background:#565656"></div>
  <div class="a" style="left:1142px;top:202px;width:1px;height:546px;background:#545454"></div>

  <!-- right column content -->
  <svg class="a" style="left:896px;top:72px" width="11" height="7" viewBox="0 0 11 7" fill="#d0d0d0"><path d="M5 0L1 3.5 5 7zM10 0L6 3.5 10 7z"/></svg>
  <svg class="a" style="left:1144px;top:71px" width="11" height="8" viewBox="0 0 11 8" fill="#d0d0d0"><path d="M1 0.5L5 4 1 7.5zM6 0.5L10 4 6 7.5z"/></svg>
  <div class="grp" style="top:81px;height:40px"></div>
  <div class="grp" style="top:122px;height:66px"></div>
  <div class="grp" style="top:189px;height:71px"></div>
  <div class="grp" style="top:261px;height:37px"></div>
  <div class="grp" style="top:299px;height:472px"></div>
  <svg class="a" style="left:886px;top:95px" width="20" height="18" viewBox="0 0 20 18" fill="none" stroke="#e6e6e6" stroke-width="1.2">
    <rect x="1.6" y="1.6" width="4.2" height="4"/><rect x="1.6" y="7.4" width="4.2" height="4"/><rect x="1.2" y="12.8" width="5" height="4.6" fill="#e6e6e6" stroke="none"/>
    <path d="M10 2h5" stroke-width="1.6"/><path d="M11 1.5L10.5 7c3.5-1.5 6 0.5 6 4s-2.5 5-5.5 5.5" stroke-width="1.8"/>
  </svg>
  <svg class="a" style="left:884px;top:136px" width="22" height="18" viewBox="0 0 22 18">
    <g fill="#e6e6e6"><rect x="1" y="1" width="2" height="2"/><rect x="1" y="4.5" width="2" height="2"/><rect x="1" y="8" width="2" height="2"/>
    <rect x="4.5" y="1.3" width="4" height="1.2"/><rect x="4.5" y="4.8" width="4" height="1.2"/><rect x="4.5" y="8.3" width="4" height="1.2"/>
    <path d="M20 2l-8 9 2 2z"/><path d="M11 11.5c-2 0-3 1.5-3 3s-1 2-2 2.5c3 0.5 6 0 7-3z"/></g>
  </svg>
  <svg class="a" style="left:884px;top:166px" width="22" height="17" viewBox="0 0 22 17">
    <g fill="#e6e6e6"><path d="M2 4c2-2 5-2 7 0-2 2-5 2-7 0z"/><rect x="10" y="3.3" width="10" height="1.6"/>
    <rect x="2" y="11.5" width="10" height="1.6"/><path d="M20 7l-7 5 5 4c2-2 3-6 2-9z"/></g>
  </svg>
  <div class="a" style="left:888px;top:205px;font-size:16px;line-height:18px;color:#e6e6e6">A</div>
  <div class="a" style="left:901px;top:206px;width:1px;height:16px;background:#e6e6e6"></div>
  <svg class="a" style="left:889px;top:234px" width="12" height="17" viewBox="0 0 12 17" fill="#e6e6e6"><path d="M5 1h6v1.5H9.5V16H8V2.5H7V16H5.5V9C2.5 9 1 7 1 5s1.5-4 4-4z"/></svg>
  <svg class="a" style="left:886px;top:274px" width="18" height="19" viewBox="0 0 18 19" fill="none" stroke="#e6e6e6" stroke-width="1.3"><path d="M9 1l7.5 4v9L9 18 1.5 14V5z"/><path d="M1.5 5L9 9l7.5-4M9 9v9"/><path d="M3 8l4 2M3 10.5l4 2M3 13l4 2" stroke-width="0.8"/></svg>
  <!-- layers tabs -->
  <div class="a" style="left:917px;top:81px;width:40px;height:27px;background:#535353"></div>
  <div class="a" style="left:925px;top:87px;font-size:12px;line-height:16px;color:#f0f0f0"><i class="c">图</i><i class="c">层</i></div>
  <div class="a" style="left:957px;top:81px;width:1px;height:27px;background:#3a3a3a"></div>
  <div class="a" style="left:966px;top:87px;font-size:12px;line-height:16px;color:#c8c8c8"><i class="c">通</i><i class="c">道</i></div>
  <div class="a" style="left:998px;top:81px;width:1px;height:27px;background:#3a3a3a"></div>
  <div class="a" style="left:1010px;top:87px;font-size:12px;line-height:16px;color:#c8c8c8"><i class="c">路</i><i class="c">径</i></div>
  <div class="a" style="left:1043px;top:81px;width:1px;height:27px;background:#3a3a3a"></div>
  <svg class="a" style="left:1142px;top:89px" width="11" height="10" viewBox="0 0 11 10" fill="#d0d0d0"><rect y="0" width="11" height="1.3"/><rect y="3" width="11" height="1.3"/><rect y="6" width="11" height="1.3"/><rect y="9" width="11" height="1"/></svg>
  <!-- filter row -->
  <div class="a" style="left:919px;top:116px;width:86px;height:23px;background:#3e3e3e;border:1px solid #474747"></div>
  <svg class="a" style="left:925px;top:122px" width="12" height="12" viewBox="0 0 12 12" fill="none" stroke="#f0f0f0"><circle cx="5" cy="5" r="3.5" stroke-width="1.7"/><path d="M7.5 7.5L11 11" stroke-width="2"/></svg>
  <div class="a" style="left:941px;top:120px;font-size:12px;line-height:16px;color:#f0f0f0"><i class="c">类</i><i class="c">型</i></div>
  <svg class="a" style="left:991px;top:126px" width="9" height="6" viewBox="0 0 9 6"><path d="M1 1l3.5 3.5L8 1" stroke="#c8c8c8" stroke-width="1.3" fill="none"/></svg>
  <svg class="a" style="left:1020px;top:121px" width="140" height="18" viewBox="0 0 140 18">
    <rect x="1" y="1.5" width="11" height="9" fill="none" stroke="#e6e6e6" stroke-width="1.4"/><path d="M3 9l2-3 1.5 2 1.5-2.5L10 9z" fill="#e6e6e6"/>
    <circle cx="31.5" cy="6.5" r="5" fill="#e6e6e6"/><path d="M28 10L35 3" stroke="#535353" stroke-width="1.4"/><path d="M35.5 3a5 5 0 0 1-7 7z" fill="#9a9a9a"/>
    <path d="M51 1.5h10v3h-1l-0.8-1.5h-2.5v7.5h1.8V12h-5v-1.5h1.8V3h-2.5L52 4.5h-1z" fill="#ececec"/>
    <rect x="76" y="2.5" width="9" height="9" fill="none" stroke="#e6e6e6" stroke-width="1.2"/><g fill="#e6e6e6"><rect x="74.5" y="1" width="3" height="3"/><rect x="83.5" y="1" width="3" height="3"/><rect x="74.5" y="10" width="3" height="3"/><rect x="83.5" y="10" width="3" height="3"/></g>
    <path d="M103 1h4l2.5 2.5V12H103z" fill="none" stroke="#e6e6e6" stroke-width="1.2"/><rect x="99.5" y="6" width="6" height="6" fill="#e6e6e6"/>
    <circle cx="130" cy="3.5" r="3.5" fill="#e0e0e0"/><rect x="127" y="7" width="6" height="10" rx="1" fill="#404040"/>
  </svg>
  <div class="a" style="left:917px;top:140px;width:226px;height:1px;background:#444"></div>
  <!-- blend row -->
  <div class="a" style="left:919px;top:146px;width:116px;height:22px;background:#4e4e4e;border:1px solid #4a4a4a"></div>
  <div class="a" style="left:928px;top:150px;font-size:12px;line-height:16px;color:#8a8a8a"><i class="c">正</i><i class="c">常</i></div>
  <svg class="a" style="left:1021px;top:155px" width="9" height="6" viewBox="0 0 9 6"><path d="M1 1l3.5 3.5L8 1" stroke="#707070" stroke-width="1.3" fill="none"/></svg>
  <div class="a" style="left:1042px;top:150px;font-size:12px;line-height:16px;color:#8a8a8a;letter-spacing:-0.5px"><i class="c">不</i><i class="c">透</i><i class="c">明</i><i class="c">度</i>:</div>
  <div class="a" style="left:1101px;top:147px;width:37px;height:19px;background:#4b4b4b"></div>
  <div class="a" style="left:1104px;top:150px;font-size:11px;line-height:14px;color:#808080">100%</div>
  <div class="a" style="left:1139px;top:147px;width:15px;height:19px;background:#4b4b4b"></div>
  <svg class="a" style="left:1142px;top:155px" width="9" height="6" viewBox="0 0 9 6"><path d="M1 1l3.5 3.5L8 1" stroke="#707070" stroke-width="1.3" fill="none"/></svg>
  <div class="a" style="left:917px;top:170px;width:226px;height:1px;background:#444"></div>
  <!-- lock row -->
  <div class="a" style="left:921px;top:177px;font-size:12px;line-height:16px;color:#8a8a8a;letter-spacing:-0.5px"><i class="c">锁</i><i class="c">定</i>:</div>
  <svg class="a" style="left:957px;top:177px" width="108" height="16" viewBox="0 0 108 16">
    <rect x="1.5" y="1.5" width="11" height="11" fill="none" stroke="#8a8a8a" stroke-width="1.2"/><g fill="#8a8a8a"><rect x="3" y="3" width="3" height="3"/><rect x="8" y="3" width="3" height="3"/><rect x="5.5" y="5.5" width="3" height="3"/><rect x="3" y="8" width="3" height="3"/><rect x="8" y="8" width="3" height="3"/></g>
    <path d="M38 1l-7 8 1.5 1.5z" fill="#8a8a8a"/><path d="M31 10c-2 0-2.5 1.5-2.5 2.5S27 14 26 14.5c3 0.5 6 0 6-3z" fill="#8a8a8a"/>
    <path d="M51 1l-2 2.5h1.3v3.2h-3.2V5.4L44.6 7.5l2.5 2.1V8.3h3.2v3.2H49l2 2.5 2-2.5h-1.3V8.3h3.2v1.3l2.5-2.1-2.5-2.1v1.3h-3.2V3.5H53z" fill="#8a8a8a"/>
    <path d="M70 1v11h11M67 4h11v11" fill="none" stroke="#8a8a8a" stroke-width="1.2"/><path d="M74 4c3 0 4 2 4 4" fill="none" stroke="#8a8a8a" stroke-width="1.2"/>
    <path d="M93.5 7V4.5a3 3 0 0 1 6 0V7" fill="none" stroke="#8a8a8a" stroke-width="1.6"/><rect x="91.5" y="7" width="10" height="8" fill="#8a8a8a"/>
  </svg>
  <div class="a" style="left:1065px;top:177px;font-size:12px;line-height:16px;color:#8a8a8a;letter-spacing:-0.5px"><i class="c">填</i><i class="c">充</i>:</div>
  <div class="a" style="left:1101px;top:176px;width:37px;height:17px;background:#4b4b4b"></div>
  <div class="a" style="left:1104px;top:178px;font-size:11px;line-height:14px;color:#808080">100%</div>
  <div class="a" style="left:1139px;top:176px;width:15px;height:17px;background:#4b4b4b"></div>
  <svg class="a" style="left:1142px;top:183px" width="9" height="6" viewBox="0 0 9 6"><path d="M1 1l3.5 3.5L8 1" stroke="#707070" stroke-width="1.3" fill="none"/></svg>
  <div class="a" style="left:917px;top:198px;width:226px;height:1px;background:#444"></div>
  <!-- layers -->
  <div class="a" style="left:918px;top:202px;width:224px;height:39px;background:#4e4e4e"></div>
  <div class="a" style="left:918px;top:241px;width:224px;height:1px;background:#444"></div>
  <div class="a" style="left:918px;top:282px;width:224px;height:1px;background:#444"></div>
  <div class="a" style="left:922px;top:216px;width:14px;height:13px;border-right:1px solid #5a5a5a;border-bottom:1px solid #5a5a5a"></div>
  <div class="a" style="left:949px;top:207px;width:32px;height:30px;background-color:#fff;background-image:linear-gradient(45deg,#cfcfcf 25%,transparent 25%,transparent 75%,#cfcfcf 75%),linear-gradient(45deg,#cfcfcf 25%,transparent 25%,transparent 75%,#cfcfcf 75%);background-size:8px 8px;background-position:0 0,4px 4px"></div>
  <div class="a" style="left:967px;top:224px;width:14px;height:14px;background:#2a2a2a"></div>
  <svg class="a" style="left:968px;top:225px" width="12" height="12" viewBox="0 0 12 12" fill="none" stroke="#f0f0f0" stroke-width="1.1"><rect x="2.5" y="3" width="7" height="6.5" rx="2"/><rect x="1" y="1.5" width="2" height="2" fill="#f0f0f0" stroke="none"/><rect x="9" y="1.5" width="2" height="2" fill="#f0f0f0" stroke="none"/><rect x="1" y="8.5" width="2" height="2" fill="#f0f0f0" stroke="none"/><rect x="9" y="8.5" width="2" height="2" fill="#f0f0f0" stroke="none"/></svg>
  <div class="a" style="left:990px;top:215px;font-size:12px;line-height:16px;color:#f0f0f0;white-space:nowrap"><i class="c">椭</i><i class="c">圆</i> 1</div>
  <div class="a" style="left:918px;top:242px;width:224px;height:40px;background:#565656"></div>
  <div class="a" style="left:945px;top:242px;width:38px;height:40px;background:#595959"></div>
  <div class="a" style="left:983px;top:242px;width:159px;height:40px;background:#6a6a6a"></div>
  <svg class="a" style="left:923px;top:259px" width="15" height="10" viewBox="0 0 15 10"><path d="M0.5 5C3 1 12 1 14.5 5 12 9 3 9 0.5 5z" fill="#f0f0f0"/><circle cx="7.5" cy="5" r="2.6" fill="#2e2e2e"/><circle cx="8.3" cy="4.2" r="0.8" fill="#bbb"/></svg>
  <div class="a" style="left:946px;top:244px;width:37px;height:37px;border:1px solid #f6f6f6"></div>
  <div class="a" style="left:957px;top:244px;width:15px;height:37px;background:#595959"></div>
  <div class="a" style="left:946px;top:255px;width:37px;height:15px;background:#595959"></div>
  <div class="a" style="left:948px;top:246px;width:33px;height:33px;background:#1e1e1e"></div>
  <div class="a" style="left:949px;top:247px;width:31px;height:31px;background:#ddf5e2"></div>
  <div class="a" style="left:990px;top:256px;font-size:12px;line-height:16px;color:#f0f0f0;white-space:nowrap"><i class="c">背</i><i class="c">景</i></div>
  <svg class="a" style="left:1115px;top:257px" width="12" height="14" viewBox="0 0 12 14" fill="none" stroke="#e6e6e6" stroke-width="1.2"><path d="M3 6V4a3 3 0 0 1 6 0v2"/><rect x="1.5" y="6.5" width="9" height="6.5"/><rect x="5.3" y="9" width="1.4" height="1.6" fill="#e6e6e6" stroke="none"/></svg>
  <!-- bottom layer icons -->
  <div class="a" style="left:918px;top:747px;width:238px;height:1px;background:#545454"></div>
  <svg class="a" style="left:955px;top:750px" width="180" height="16" viewBox="0 0 180 16">
    <g fill="none" stroke="#bdbdbd" stroke-width="1.4"><rect x="1" y="5" width="7" height="5" rx="2.5"/><rect x="7" y="5" width="7" height="5" rx="2.5"/></g>
    <text x="28" y="12" font-size="13" font-style="italic" fill="#b8b8b8" font-family="Liberation Serif">fx</text>
    <rect x="56" y="3" width="13" height="10" fill="#e6e6e6"/><circle cx="62.5" cy="8" r="2.6" fill="#535353"/>
    <circle cx="90" cy="8" r="5.5" fill="#e6e6e6"/><path d="M86 12L94 4" stroke="#535353" stroke-width="1.4"/><path d="M94 4.5a5.5 5.5 0 0 1-8 7.5z" fill="#9a9a9a"/>
    <path d="M110 3h5l1 1.5h6V13h-12z" fill="#e6e6e6"/><rect x="111" y="6" width="10" height="6" fill="#c8c8c8"/>
    <path d="M138 3h8v10h-9V7z" fill="none" stroke="#e6e6e6" stroke-width="1.4"/><path d="M137 7h4V3" fill="none" stroke="#e6e6e6" stroke-width="1.2"/>
    <path d="M161 4h12M165 4V2h4v2M162.5 5l1 10h7l1-10" fill="none" stroke="#e6e6e6" stroke-width="1.3"/><path d="M165.5 7v6M167 7v6M168.5 7v6" stroke="#e6e6e6" stroke-width="0.9"/>
  </svg>

  <!-- overlay circles -->
  <div class="a" style="left:-12px;top:736px;width:32px;height:32px;border-radius:50%;background:radial-gradient(circle,rgba(110,90,160,0.35),rgba(110,90,160,0) 70%)"></div>
  <div class="a" style="left:-8px;top:754px;width:38px;height:38px;border-radius:50%;background:#f7c20a"></div>
  <div class="a" style="left:23px;top:756px;width:45px;height:45px;border-radius:50%;background:#f4f6fb"></div>
  <div class="a" style="left:0px;top:746px;width:4px;height:5px;border-radius:50%;background:#d8c040"></div>
  <div class="a" style="left:19px;top:746px;width:5px;height:5px;border-radius:50%;background:#d8c040"></div>
</div>
</body></html>
